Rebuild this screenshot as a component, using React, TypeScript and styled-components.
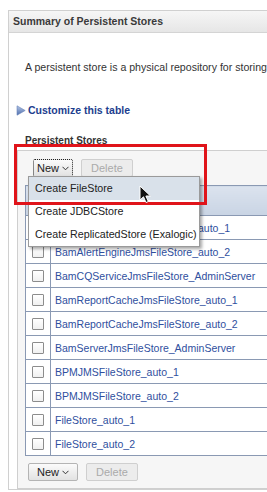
import styled, { createGlobalStyle } from 'styled-components';

const rows = [
    'BamAlertEngineJmsFileStore_auto_1',
    'BamAlertEngineJmsFileStore_auto_2',
    'BamCQServiceJmsFileStore_AdminServer',
    'BamReportCacheJmsFileStore_auto_1',
    'BamReportCacheJmsFileStore_auto_2',
    'BamServerJmsFileStore_AdminServer',
    'BPMJMSFileStore_auto_1',
    'BPMJMSFileStore_auto_2',
    'FileStore_auto_1',
    'FileStore_auto_2',
];

const menuItems = ['Create FileStore', 'Create JDBCStore', 'Create ReplicatedStore (Exalogic)'];

const Chevron = () => (
    <ChevronIcon width="7" height="5" viewBox="0 0 7 5">
        <path d="M0.5 0.8 L3.5 3.8 L6.5 0.8" fill="none" stroke="#333" strokeWidth="1" />
    </ChevronIcon>
);

const Toolbar = ({ focused, bottom }: { focused?: boolean; bottom?: boolean }) => (
    <ToolbarRow $bottom={bottom}>
        <NewWrap>
            <ActionButton $focused={focused}>
                New
                <Chevron />
            </ActionButton>
            {focused && (
                <Menu>
                    {menuItems.map((m, i) => (
                        <MenuItem key={m} $active={i === 0}>
                            {m}
                        </MenuItem>
                    ))}
                </Menu>
            )}
        </NewWrap>
        <ActionButton disabled>Delete</ActionButton>
    </ToolbarRow>
);

const App = () => {
    return (
        <Page>
            <GlobalStyle />
            <Panel>
                <PanelHeader>Summary of Persistent Stores</PanelHeader>
                <PanelBody>
                    <Desc>A persistent store is a physical repository for storing data, such as persistent JMS messages.</Desc>
                    <Customize>
                        <svg width="10" height="11" viewBox="0 0 10 11">
                            <defs>
                                <linearGradient id="tri" x1="0" y1="0" x2="0" y2="1">
                                    <stop offset="0" stopColor="#b4c6e6" />
                                    <stop offset="1" stopColor="#4f6fae" />
                                </linearGradient>
                            </defs>
                            <path d="M1 0.8 L9.2 5.5 L1 10.2 Z" fill="url(#tri)" stroke="#6a84b8" strokeWidth="0.6" />
                        </svg>
                        <span>Customize this table</span>
                    </Customize>
                    <SectionTitle>Persistent Stores</SectionTitle>
                    <TableBox>
                        <Toolbar focused />
                        <StoreTable>
                            <thead>
                                <tr>
                                    <HeadCell $narrow />
                                    <HeadCell>Name</HeadCell>
                                </tr>
                            </thead>
                            <tbody>
                                {rows.map((r) => (
                                    <tr key={r}>
                                        <CheckCell>
                                            <CheckBox />
                                        </CheckCell>
                                        <NameCell>
                                            <a>{r}</a>
                                        </NameCell>
                                    </tr>
                                ))}
                            </tbody>
                        </StoreTable>
                        <Toolbar bottom />
                    </TableBox>
                </PanelBody>
            </Panel>
            <Highlight />
            <Cursor width="13" height="19" viewBox="0 0 13 19">
                <path d="M1 1 L1 15 L4.5 11.8 L7 17.5 L9.3 16.5 L6.9 11 L11.5 11 Z" fill="#111" stroke="#fff" strokeWidth="1" strokeLinejoin="round" />
            </Cursor>
        </Page>
    );
};

const GlobalStyle = createGlobalStyle`
    html, body {
        margin: 0;
        padding: 0;
        background: #ffffff;
        overflow: hidden;
    }
    body {
        font-family: 'Liberation Sans', Arial, sans-serif;
        font-size: 10px;
        color: #222;
    }
`;

// 화면 전체
const Page = styled.div`
    position: relative;
    width: 267px;
    height: 492px;
    overflow: hidden;
    padding: 10px 0 0 8px;
    box-sizing: border-box;
`;

const Panel = styled.div`
    width: 420px;
    border: 1px solid #d0d0d0;
    border-right: none;
`;

const PanelHeader = styled.div`
    height: 21px;
    line-height: 21px;
    padding-left: 4px;
    background: linear-gradient(#f6f6f6, #e6e6e6);
    border-bottom: 1px solid #d4d4d4;
    font-weight: bold;
    font-size: 10.5px;
    color: #3a3a3a;
`;

const PanelBody = styled.div`
    padding: 0 0 0 8px;
`;

const Desc = styled.div`
    white-space: nowrap;
    padding: 28px 0 0 8px;
    height: 12px;
    line-height: 12px;
    font-size: 10.6px;
    color: #333;
`;

const Customize = styled.div`
    display: flex;
    align-items: center;
    gap: 2px;
    margin: 31px 0 0 -1px;
    height: 12px;
    color: #1d3e8e;
    font-weight: bold;
    font-size: 10.5px;
`;

const SectionTitle = styled.div`
    margin: 19px 0 0 8px;
    height: 12px;
    line-height: 12px;
    font-weight: bold;
    color: #333;
`;

// 테이블 영역
const TableBox = styled.div`
    margin-top: 3px;
    background: #f6f6f6;
    border: 1px solid #cfcfcf;
    border-right: none;
    padding: 0 0 0 7px;
`;

const ToolbarRow = styled.div<{ $bottom?: boolean }>`
    display: flex;
    align-items: center;
    gap: 8px;
    height: ${(p) => (p.$bottom ? '32px' : '34px')};
    padding-left: 3px;
`;

const NewWrap = styled.div`
    position: relative;
`;

const ChevronIcon = styled.svg`
    margin-left: 3px;
`;

const ActionButton = styled.button<{ $focused?: boolean }>`
    display: flex;
    align-items: center;
    height: 18px;
    padding: 0 ${(p) => (p.$focused ? '3px' : '8px')};
    margin-left: ${(p) => (p.$focused ? '5px' : '0')};
    font-family: 'Liberation Sans', Arial, sans-serif;
    font-size: 11px;
    color: #222;
    background: linear-gradient(#fbfbfb, #e2e2e2);
    border: ${(p) => (p.$focused ? '1px dotted #222' : '1px solid #b4b4b4')};
    border-radius: 2px;
    &:disabled {
        color: #aaa;
        background: #ececec;
        border: 1px solid #cfcfcf;
        padding: 0 9px;
    }
`;

// 드롭다운 메뉴
const Menu = styled.div`
    position: absolute;
    left: 0;
    top: 17px;
    width: 170px;
    background: #fff;
    border: 1px solid #9a9a9a;
    box-shadow: 2px 2px 3px rgba(0, 0, 0, 0.35);
    z-index: 2;
`;

const MenuItem = styled.div<{ $active?: boolean }>`
    height: 23px;
    line-height: 23px;
    padding-left: 6px;
    white-space: nowrap;
    font-size: 10.7px;
    color: #222;
    background: ${(p) => (p.$active ? '#d9e1ea' : '#fff')};
`;

const StoreTable = styled.table`
    border-collapse: collapse;
    background: #fff;
    width: 420px;
    border-left: 1px solid #8a99b3;
`;

const HeadCell = styled.th<{ $narrow?: boolean }>`
    height: 29px;
    width: ${(p) => (p.$narrow ? '24px' : 'auto')};
    padding: 0;
    background: linear-gradient(#dbe3ee, #c9d4e4);
    border: 1px solid #8a99b3;
    border-left: none;
    color: transparent;
`;

const CheckCell = styled.td`
    width: 24px;
    height: 23px;
    padding: 0;
    border: 1px solid #8a99b3;
    border-left: none;
    text-align: center;
`;

const CheckBox = styled.div`
    width: 10px;
    height: 10px;
    margin: 0 auto;
    border: 1px solid #8c8c8c;
    border-radius: 1px;
    background: linear-gradient(#ffffff, #f0f0f0);
`;

const NameCell = styled.td`
    padding: 0 0 0 4px;
    border: 1px solid #8a99b3;
    border-left: none;
    white-space: nowrap;
    a {
        color: #2f4f9e;
        font-size: 10.5px;
    }
`;

// 빨간 강조 박스
const Highlight = styled.div`
    position: absolute;
    left: 14px;
    top: 144px;
    width: 187px;
    height: 55px;
    border: 3px solid #e0141a;
    pointer-events: none;
    z-index: 3;
`;

const Cursor = styled.svg`
    position: absolute;
    left: 139px;
    top: 185px;
    z-index: 4;
`;

export default App;
